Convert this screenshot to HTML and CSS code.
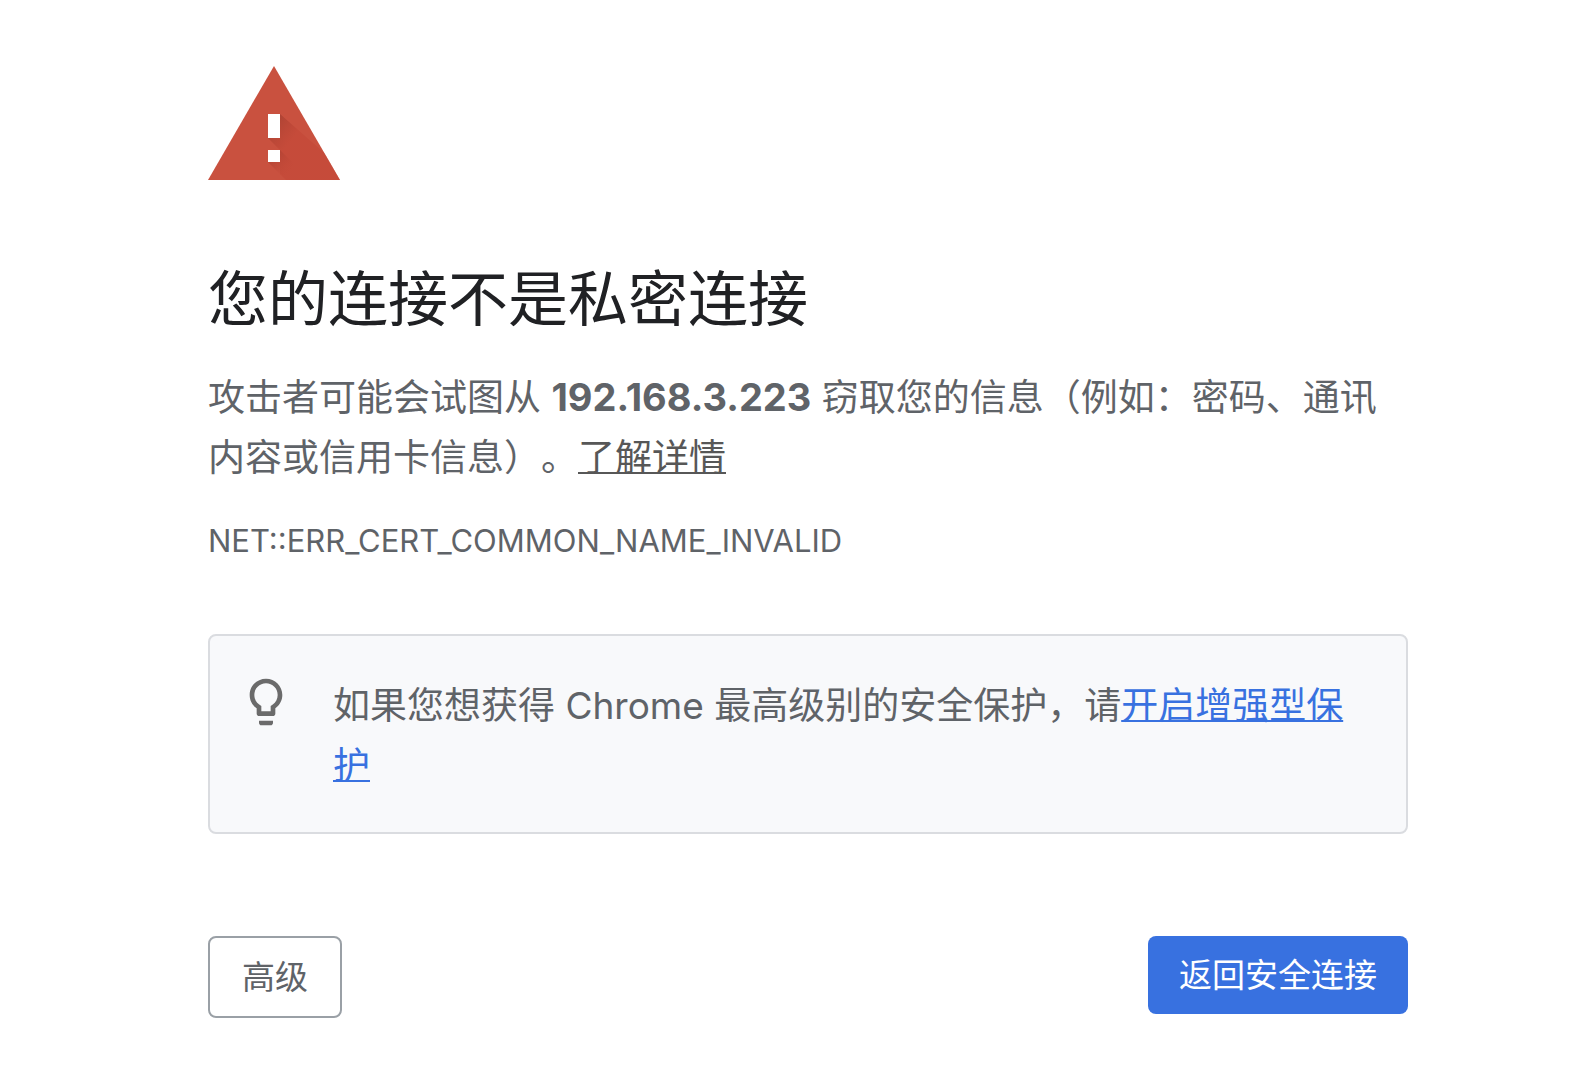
FILE: index.html
```html
<!DOCTYPE html>
<html lang="zh-CN">
<head>
<meta charset="utf-8">
<meta name="viewport" content="width=device-width, initial-scale=1">
<title>隐私设置错误</title>
<link rel="stylesheet" href="styles.css">
</head>
<body>
<main class="interstitial">
  <svg class="warning-icon" viewBox="0 0 132 114" aria-hidden="true">
    <defs>
      <clipPath id="triangle"><path d="M66 0 132 114H0Z"/></clipPath>
      <linearGradient id="shade-top" gradientUnits="userSpaceOnUse" x1="62" y1="60" x2="82" y2="76">
        <stop offset="0" stop-color="#a53f30" stop-opacity=".75"/>
        <stop offset="1" stop-color="#c24535" stop-opacity=".5"/>
      </linearGradient>
      <linearGradient id="shade-dot" gradientUnits="userSpaceOnUse" x1="64" y1="88" x2="82" y2="104">
        <stop offset="0" stop-color="#a53f30" stop-opacity=".7"/>
        <stop offset="1" stop-color="#c24535" stop-opacity="0"/>
      </linearGradient>
    </defs>
    <path fill="#c9513f" d="M66 0 132 114H0Z"/>
    <g clip-path="url(#triangle)">
      <path fill="url(#shade-top)" d="M72 48 138 106V114H78L72 108V84L60 72Z"/>
      <path fill="url(#shade-dot)" d="M72 84 102 114H78L60 96Z"/>
    </g>
    <path fill="#fff" d="M60 48h12v24H60zM60 84h12v12H60z"/>
  </svg>

  <h1 class="title">您的连接不是私密连接</h1>
  <p class="message">攻击者可能会试图从 <strong>192.168.3.223</strong> 窃取您的信息（例如：密码、通讯内容或信用卡信息）。<a class="learn-more" href="#details">了解详情</a></p>
  <p class="error-code">NET::ERR_CERT_COMMON_NAME_INVALID</p>

  <section class="protection">
    <svg class="bulb-icon" viewBox="0 0 24 24" aria-hidden="true">
      <path fill="currentColor" d="M9 21c0 .5.4 1 1 1h4c.6 0 1-.5 1-1v-1H9v1zm3-19C8.1 2 5 5.100 5 9c0 2.400 1.200 4.500 3 5.700V17c0 .5.400 1 1 1h6c.6 0 1-.5 1-1v-2.300c1.800-1.300 3-3.400 3-5.700 0-3.900-3.100-7-7-7zm2.900 11.100l-.9.600V16h-4v-2.300l-.9-.6C7.800 12.200 7 10.600 7 9c0-2.800 2.200-5 5-5s5 2.200 5 5c0 1.600-.8 3.200-2.100 4.100z"/>
    </svg>
    <p class="protection-text">如果您想获得 Chrome 最高级别的安全保护，请<a class="enable-link" href="#enhanced">开启增强型保护</a></p>
  </section>

  <div class="actions">
    <button class="button button-secondary" type="button">高级</button>
    <button class="button button-primary" type="button">返回安全连接</button>
  </div>
</main>
</body>
</html>
```
FILE: styles.css
```css
* {
  box-sizing: border-box;
}

body {
  margin: 0;
  background: #fff;
  color: #5f6368;
  font-family: Inter, "Noto Sans CJK SC", sans-serif;
  font-size: 37px;
  line-height: 60px;
  text-spacing-trim: space-all;
}

.interstitial {
  padding: 66px 164px 56px 208px;
}

.warning-icon {
  display: block;
  width: 132px;
  height: 114px;
}

.title {
  margin: 79px 0 28px;
  color: #202124;
  font-size: 60px;
  font-weight: 400;
  line-height: 80px;
}

.message {
  margin: 0;
}

.message strong {
  font-size: 38px;
  font-weight: 700;
}

.learn-more,
.enable-link {
  text-decoration-thickness: 2px;
  text-underline-offset: 1px;
  text-decoration-skip-ink: none;
}

.learn-more {
  color: #575757;
}

.enable-link {
  color: #3871e0;
}

.error-code {
  margin: 23px 0 63px;
  font-size: 31px;
}

.protection {
  display: flex;
  align-items: flex-start;
  gap: 39px;
  padding: 38px 38px 36px 28px;
  border: 2px solid #dadce0;
  border-radius: 8px;
  background: #f8f9fb;
}

.bulb-icon {
  flex: none;
  width: 56px;
  height: 56px;
  color: #6b6b6b;
}

.protection-text {
  flex: 1;
  margin: 2px 0 0;
}

.actions {
  display: flex;
  align-items: flex-start;
  justify-content: space-between;
  margin-top: 102px;
}

.button {
  padding: 16px 32px;
  border: 0;
  border-radius: 8px;
  font: inherit;
  font-size: 33px;
  line-height: 46px;
}

.button-secondary {
  border: 2px solid #9aa0a6;
  background: #fff;
  color: #5f6368;
}

.button-primary {
  padding: 16px 31px;
  background: #3871e0;
  color: #fff;
}
```
